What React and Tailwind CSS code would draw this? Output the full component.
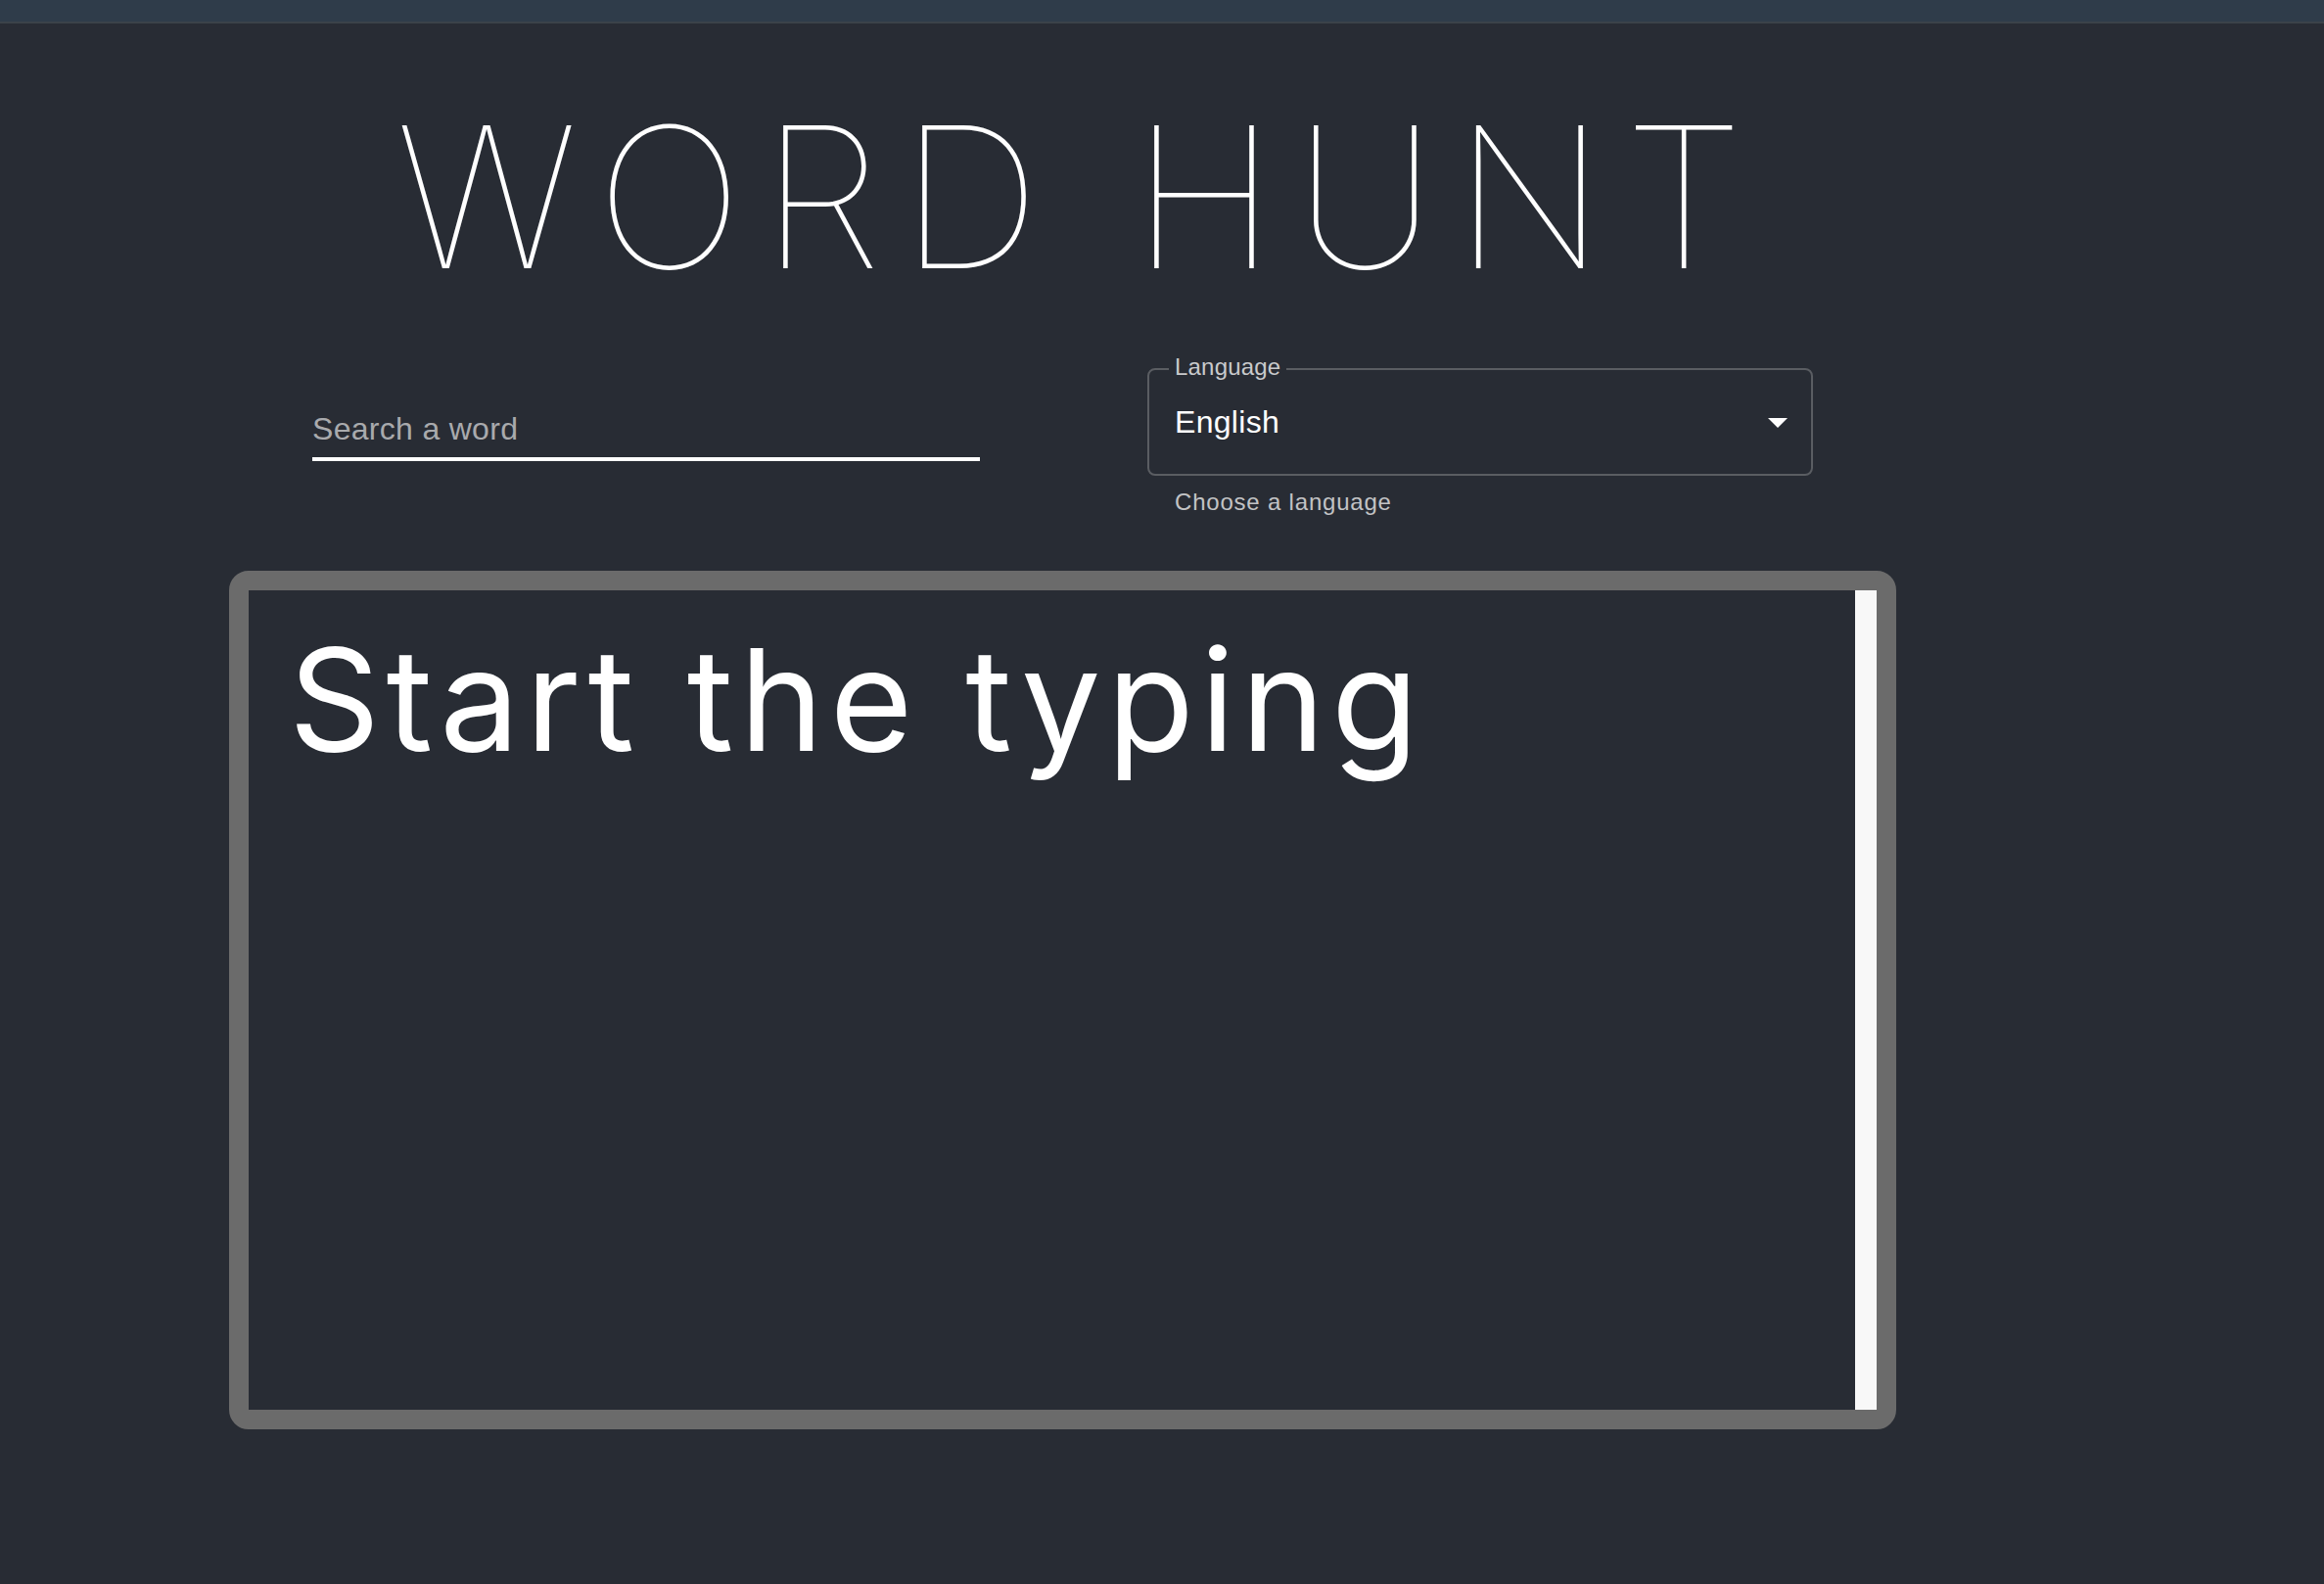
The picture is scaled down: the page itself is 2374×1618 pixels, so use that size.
import { useState } from 'react';

export default function App() {
  const [word, setWord] = useState('');

  return (
    <div className="min-h-screen bg-[#282c34]">
      {/* top strip */}
      <div className="h-[22px] bg-[#2f3c4a]" />
      <div className="h-[2px] bg-[#3b4249]" />

      <div className="ml-[234px] w-[1703px]">
        {/* title */}
        <h1
          className="mt-[77px] h-[200px] pl-[34px] text-center text-[200px] leading-none font-thin tracking-[19px] text-white"
          style={{ fontFamily: 'Inter, Lato, sans-serif' }}
        >
          WORD HUNT
        </h1>

        {/* search + language */}
        <div className="mt-[75px] flex justify-between px-[85px]" style={{ fontFamily: '"Liberation Sans", Arial, sans-serif' }}>
          <div className="mt-[46px] w-[682px] h-[49px] border-b-4 border-white">
            <input
              value={word}
              onChange={(e) => setWord(e.target.value)}
              placeholder="Search a word"
              className="w-full h-[32px] bg-transparent text-[32px] leading-[32px] tracking-[0.3px] text-white outline-none placeholder:text-[#a9aaad]"
            />
          </div>

          <div className="w-[680px]">
            <div className="relative flex h-[110px] items-center justify-between rounded-[8px] border-2 border-[#5a5d62] pl-[26px] pr-[10px]">
              <span className="absolute left-[20px] top-[-15px] bg-[#282c34] px-[6px] text-[24px] leading-[24px] tracking-[0.2px] text-[#c9cacc]">
                Language
              </span>
              <span className="text-[32px] leading-[32px] tracking-[0.3px] text-white">English</span>
              <svg width="48" height="48" viewBox="0 0 24 24" fill="#ffffff">
                <path d="M7 10l5 5 5-5z" />
              </svg>
            </div>
            <p className="mt-[15px] pl-[28px] text-[24px] leading-[24px] tracking-[0.8px] text-[#c2c3c5]">Choose a language</p>
          </div>
        </div>

        {/* typing area */}
        <div className="mt-[58px] flex h-[877px] rounded-[20px] border-[20px] border-[#6b6b6b]">
          <div className="flex-1 pl-[41px] pt-[39px]">
            <p
              className="text-[145px] leading-none tracking-[6.5px] text-white"
              style={{ fontFamily: 'Inter, sans-serif' }}
            >
              Start the typing
            </p>
          </div>
          <div className="w-[22px] bg-[#f8f8f8]" />
        </div>
      </div>
    </div>
  );
}
